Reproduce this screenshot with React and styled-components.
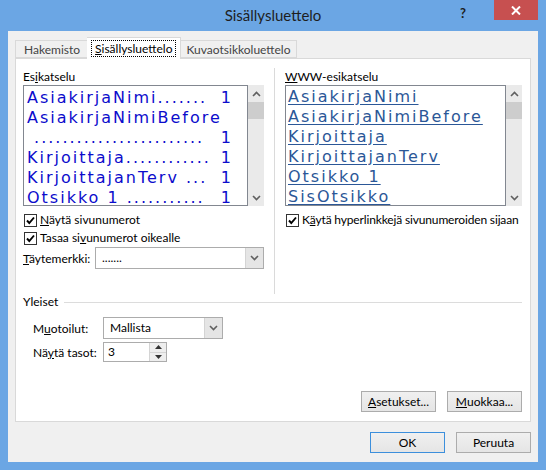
import styled, { createGlobalStyle } from "styled-components";

const GlobalStyle = createGlobalStyle`
    body {
        margin: 0;
        font-family: "Segoe UI", Lato, "Noto Sans", sans-serif;
        font-size: 12px;
        color: #000;
    }
`

// left preview: entry text (with its leader dots) and page number
const printLines = [
    ["AsiakirjaNimi.......", "1"],
    ["AsiakirjaNimiBefore", ""],
    [" ........................", "1"],
    ["Kirjoittaja............", "1"],
    ["KirjoittajanTerv ...", "1"],
    ["Otsikko 1 ...........", "1"],
];

const webLines = [
    "AsiakirjaNimi",
    "AsiakirjaNimiBefore",
    "Kirjoittaja",
    "KirjoittajanTerv",
    "Otsikko 1",
    "SisOtsikko",
];

function Check() {
    return (
        <CheckBox>
            <svg width="11" height="11" viewBox="0 0 11 11">
                <path d="M2 5.5 L4.3 8 L9 2.5" fill="none" stroke="#000" strokeWidth="1.9" />
            </svg>
        </CheckBox>
    )
}

function Chevron({ up }) {
    return (
        <svg width="9" height="6" viewBox="0 0 9 6">
            <path d={up ? "M1 5 L4.5 1.5 L8 5" : "M1 1 L4.5 4.5 L8 1"} fill="none" stroke="#606060" strokeWidth="1.6" />
        </svg>
    )
}

function Scroll() {
    return (
        <Scrollbar>
            <Arrow><Chevron up /></Arrow>
            <Thumb />
            <Arrow $bottom><Chevron /></Arrow>
        </Scrollbar>
    )
}

function Combo({ width, value }) {
    return (
        <ComboBox $width={width}>
            <ComboValue>{value}</ComboValue>
            <DropButton><Chevron /></DropButton>
        </ComboBox>
    )
}

function App() {
    return (
        <Window>
            <GlobalStyle />
            <TitleBar>
                <span />
                <Title>Sisällysluettelo</Title>
                <TitleButtons>
                    <Help>?</Help>
                    <Close>
                        <svg width="10" height="9" viewBox="0 0 10 9">
                            <path d="M1 0.5 L9 8.5 M9 0.5 L1 8.5" stroke="#fff" strokeWidth="2" />
                        </svg>
                    </Close>
                </TitleButtons>
            </TitleBar>

            <Client>
                <TabRow>
                    <Tab $pad="0 7px 0 8px">Hakemisto</Tab>
                    <Tab $active><Focus><u>S</u>isällysluettelo</Focus></Tab>
                    <Tab $pad="0 5px 0 6px">Kuvaotsikkoluettelo</Tab>
                </TabRow>

                <Panel>
                    <Columns>
                        <Column>
                            <Label>Es<u>i</u>katselu</Label>
                            <Preview>
                                <PreviewText>
                                    {printLines.map(([text, page], i) => (
                                        <Line key={i}>
                                            <Entry>{text}</Entry>
                                            <Page>{page}</Page>
                                        </Line>
                                    ))}
                                </PreviewText>
                                <Scroll />
                            </Preview>
                            <CheckRow $first><Check /><span><u>N</u>äytä sivunumerot</span></CheckRow>
                            <CheckRow><Check /><span>Tasaa si<u>v</u>unumerot oikealle</span></CheckRow>
                            <FieldRow>
                                <FieldLabel $width="72px"><u>T</u>äytemerkki:</FieldLabel>
                                <Combo width="169px" value="......." />
                            </FieldRow>
                        </Column>

                        <Divider />

                        <Column>
                            <Label><u>W</u>WW-esikatselu</Label>
                            <Preview>
                                <PreviewText $web>
                                    {webLines.map((l, i) => <Line key={i}><a>{l}</a></Line>)}
                                </PreviewText>
                                <Scroll />
                            </Preview>
                            <CheckRow $first $tight><Check /><span>K<u>ä</u>ytä hyperlinkkejä sivunumeroiden sijaan</span></CheckRow>
                        </Column>
                    </Columns>

                    <GroupTitle>Yleiset<Rule /></GroupTitle>
                    <Group>
                        <FieldRow>
                            <FieldLabel $width="70px">M<u>u</u>otoilut:</FieldLabel>
                            <Combo width="120px" value="Mallista" />
                        </FieldRow>
                        <FieldRow $small>
                            <FieldLabel $width="70px">Nä<u>y</u>tä tasot:</FieldLabel>
                            <Spin>
                                <SpinValue>3</SpinValue>
                                <SpinButtons>
                                    <SpinButton>
                                        <svg width="7" height="4" viewBox="0 0 7 4"><path d="M0 4 L3.5 0 L7 4 Z" fill="#333" /></svg>
                                    </SpinButton>
                                    <SpinButton>
                                        <svg width="7" height="4" viewBox="0 0 7 4"><path d="M0 0 L3.5 4 L7 0 Z" fill="#333" /></svg>
                                    </SpinButton>
                                </SpinButtons>
                            </Spin>
                        </FieldRow>
                    </Group>

                    <ButtonRow>
                        <Button><u>A</u>setukset...</Button>
                        <Button><u>M</u>uokkaa...</Button>
                    </ButtonRow>
                </Panel>

                <Footer>
                    <Button $default>OK</Button>
                    <Button>Peruuta</Button>
                </Footer>
            </Client>
        </Window>
    )
}

export default App;

const Window = styled.div`
    width: 546px;
    height: 470px;
    background: #6ba6e4;
    display: flex;
    flex-direction: column;
    overflow: hidden;
`

const TitleBar = styled.div`
    height: 31px;
    display: grid;
    grid-template-columns: 1fr auto 1fr;
    align-items: start;
`

const Title = styled.div`
    font-size: 15px;
    line-height: 30px;
    color: #1e1e1e;
`

const TitleButtons = styled.div`
    display: flex;
    justify-content: flex-end;
    align-items: flex-start;
    padding-right: 8px;
`

const Help = styled.div`
    font-weight: 700;
    font-size: 13px;
    line-height: 26px;
    color: #1e1e1e;
    margin-right: 28px;
`

const Close = styled.div`
    width: 44px;
    height: 20px;
    background: #c75050;
    display: flex;
    align-items: center;
    justify-content: center;
`

const Client = styled.div`
    flex: 1;
    margin: 0 8px 8px;
    padding: 6px 7px 9px;
    background: #f0f0f0;
    display: flex;
    flex-direction: column;
`

const TabRow = styled.div`
    height: 21px;
    display: flex;
    align-items: flex-end;
    position: relative;
    z-index: 1;
`

const Tab = styled.div`
    height: ${p => p.$active ? "21px" : "16px"};
    padding: ${p => p.$active ? "0 4px" : p.$pad};
    margin: ${p => p.$active ? "0 -1px -1px" : "0"};
    border: 1px solid #d9d9d9;
    border-bottom: ${p => p.$active ? "none" : "1px solid #d9d9d9"};
    background: ${p => p.$active ? "#fff" : "#f0f0f0"};
    color: ${p => p.$active ? "#000" : "#444"};
    display: flex;
    align-items: center;
    white-space: nowrap;
    position: relative;
    z-index: ${p => p.$active ? 2 : 0};
    & + & {
        border-left: ${p => p.$active ? "1px solid #d9d9d9" : "none"};
    }
`

const Focus = styled.span`
    border: 1px dotted #000;
    padding: 0 3px;
    line-height: 15px;
`

const Panel = styled.div`
    height: 364px;
    box-sizing: border-box;
    background: #fff;
    border: 1px solid #d9d9d9;
    padding: 10px 8px 9px 7px;
    display: flex;
    flex-direction: column;
`

const Columns = styled.div`
    height: 225px;
    display: grid;
    grid-template-columns: 241px 21px 237px;
`

const Column = styled.div`
    display: flex;
    flex-direction: column;
    min-width: 0;
`

const Divider = styled.div`
    width: 1px;
    justify-self: center;
    background: #dadada;
    margin-top: -1px;
`

const Label = styled.div`
    height: 16px;
    line-height: 16px;
`

const Preview = styled.div`
    height: 121px;
    display: flex;
`

const PreviewText = styled.div`
    flex: 1;
    min-width: 0;
    border: 1px solid #828790;
    overflow: hidden;
    padding: ${p => p.$web ? "1px 0 0 2px" : "2px 14px 0 3px"};
    font-family: "DejaVu Sans", Verdana, sans-serif;
    font-size: 16px;
    letter-spacing: 2px;
    line-height: 19px;
    color: ${p => p.$web ? "#2b5797" : "#0c0ccc"};
    white-space: pre;

    a {
        text-decoration: underline;
        text-underline-offset: 2px;
    }
`

const Line = styled.div`
    height: 20px;
    display: flex;
`

const Entry = styled.span`
    overflow: hidden;
`

const Page = styled.span`
    margin-left: auto;
    padding-left: 6px;
`

const Scrollbar = styled.div`
    width: 16px;
    background: #eaeaea;
    display: flex;
    flex-direction: column;
`

const Arrow = styled.div`
    height: 17px;
    display: flex;
    align-items: center;
    justify-content: center;
    margin-top: ${p => p.$bottom ? "auto" : "0"};
`

const Thumb = styled.div`
    height: 17px;
    background: #cdcdcd;
`

const CheckRow = styled.div`
    height: 18px;
    line-height: 18px;
    margin-top: ${p => p.$first ? "5px" : "0"};
    display: flex;
    align-items: center;
    gap: 3px;
    padding-left: 1px;
    white-space: nowrap;
    letter-spacing: ${p => p.$tight ? "-0.15px" : "normal"};
`

const CheckBox = styled.div`
    width: 13px;
    height: 13px;
    flex: none;
    box-sizing: border-box;
    border: 1px solid #333;
    background: #fff;
    display: flex;
    align-items: center;
    justify-content: center;
`

const FieldRow = styled.div`
    height: ${p => p.$small ? "20px" : "22px"};
    margin-top: ${p => p.$small ? "3px" : "0"};
    display: flex;
    align-items: center;
`

const FieldLabel = styled.div`
    width: ${p => p.$width};
    white-space: nowrap;
`

const ComboBox = styled.div`
    width: ${p => p.$width};
    height: 22px;
    box-sizing: border-box;
    border: 1px solid #acacac;
    background: #fff;
    display: flex;
`

const ComboValue = styled.div`
    flex: 1;
    padding-left: 6px;
    line-height: 20px;
`

const DropButton = styled.div`
    width: 17px;
    background: #e5e5e5;
    border-left: 1px solid #d4d4d4;
    display: flex;
    align-items: center;
    justify-content: center;
`

const GroupTitle = styled.div`
    height: 16px;
    line-height: 16px;
    display: flex;
    align-items: center;
    gap: 6px;
`

const Rule = styled.div`
    flex: 1;
    height: 1px;
    background: #dcdcdc;
`

const Group = styled.div`
    padding: 7px 0 0 10px;
    display: flex;
    flex-direction: column;
`

const Spin = styled.div`
    width: 64px;
    height: 20px;
    box-sizing: border-box;
    border: 1px solid #acacac;
    display: flex;
`

const SpinValue = styled.div`
    flex: 1;
    padding-left: 4px;
    line-height: 18px;
`

const SpinButtons = styled.div`
    width: 16px;
    display: flex;
    flex-direction: column;
    border-left: 1px solid #d4d4d4;
`

const SpinButton = styled.div`
    flex: 1;
    background: #eee;
    display: flex;
    align-items: center;
    justify-content: center;
    & + & {
        border-top: 1px solid #d4d4d4;
    }
`

const ButtonRow = styled.div`
    margin-top: auto;
    display: flex;
    justify-content: flex-end;
    gap: 11px;
`

const Button = styled.div`
    width: 75px;
    height: 21px;
    box-sizing: border-box;
    border: 1px solid ${p => p.$default ? "#3c8fdc" : "#acacac"};
    background: linear-gradient(#f0f0f0, #e5e5e5);
    display: flex;
    align-items: center;
    justify-content: center;
`

const Footer = styled.div`
    margin-top: 10px;
    display: flex;
    justify-content: flex-end;
    gap: 11px;
`
